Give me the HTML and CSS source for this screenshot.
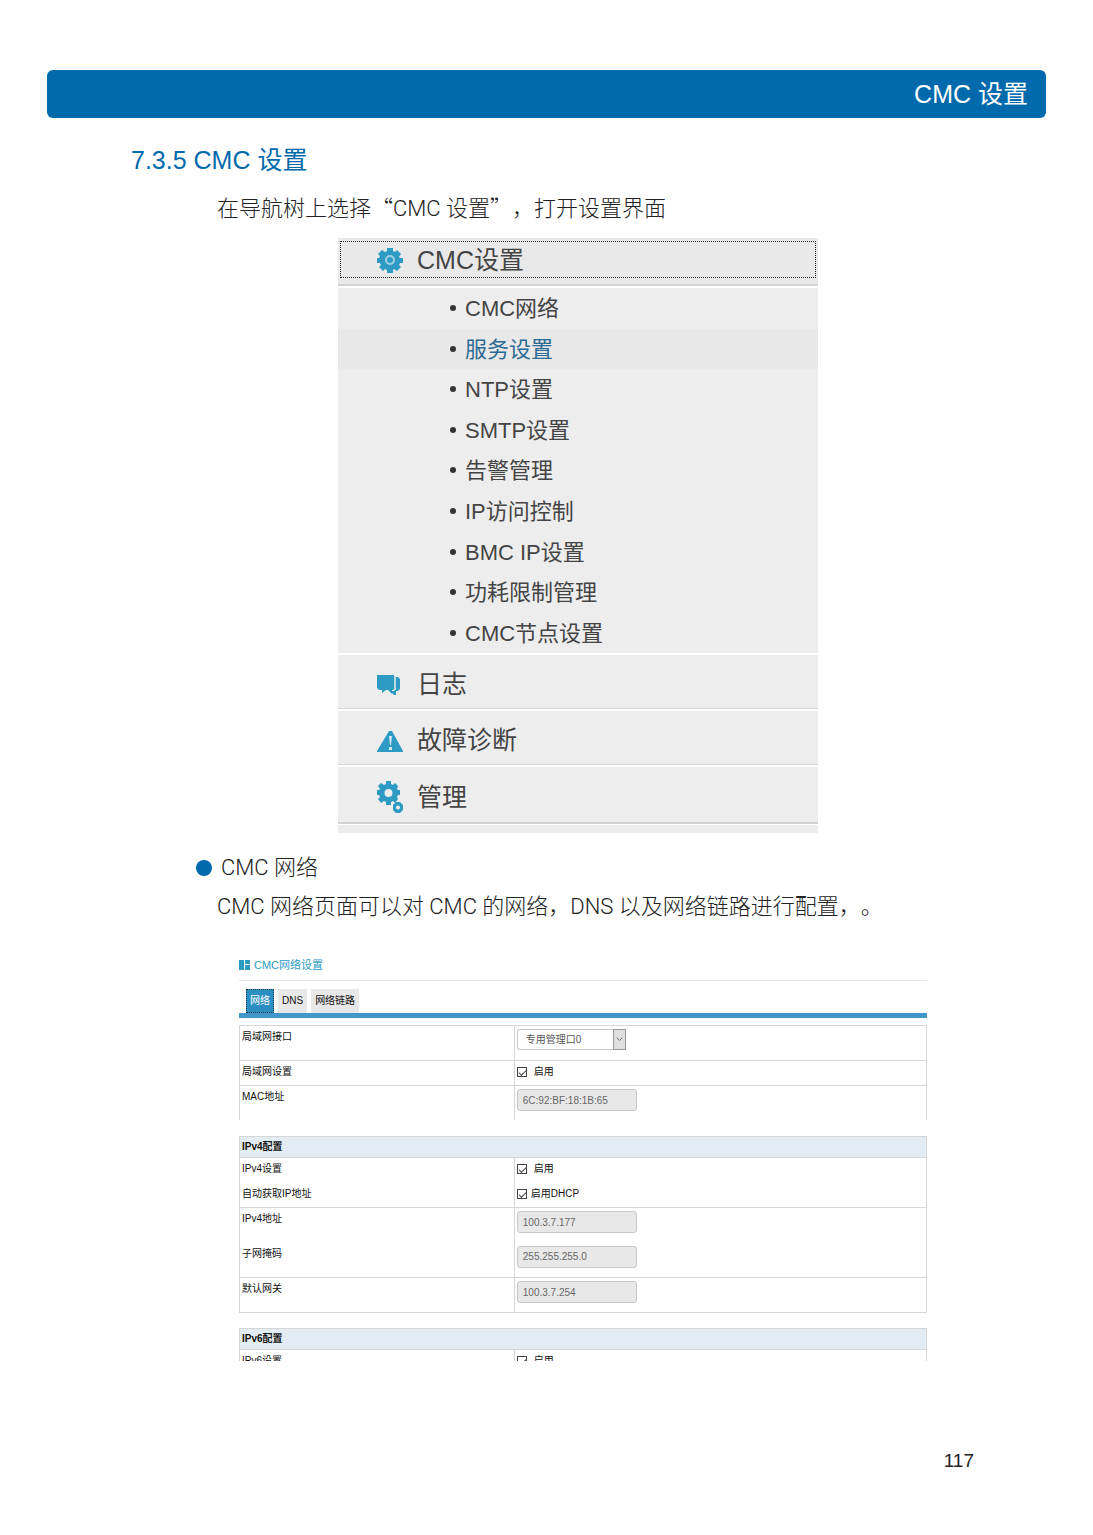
FILE: index.html
```
<!DOCTYPE html>
<html lang="zh-CN">
  <head>
    <meta charset="UTF-8" />
    <meta name="viewport" content="width=device-width, initial-scale=1.0" />
    <title>CMC 设置</title>
    <link rel="stylesheet" href="styles.css">
  </head>
  <body>
    <header class="page-header">CMC 设置</header>

    <main>
      <h1>7.3.5 CMC 设置</h1>
      <p>在导航树上选择<span class="cjk">“</span>CMC 设置<span class="cjk">”，</span>打开设置界面</p>

      <nav class="tree">
        <a class="tree-item focused" href="#cmc">
          <span class="focus">
            <svg class="icon" viewBox="0 0 26 26">
              <path fill="#2d9bc4" fill-rule="evenodd" d="M10 1h6v3l2 1 2-2 4 4-2 3 1 1h3v5h-3l-1 2 2 2-4 4-3-2-1 1v3h-6v-3l-2-1-2 2-4-4 2-2-1-2H0v-5h2l1-2-2-2 4-4 3 2 2-1z" />
              <circle cx="13" cy="13" r="4" fill="#2d9bc4" stroke="#a5d2e3" stroke-width="2" />
            </svg>
            <span class="name">CMC设置</span>
          </span>
        </a>
        <ul class="tree-sub">
          <li><a href="#network">CMC网络</a></li>
          <li class="active"><a href="#service">服务设置</a></li>
          <li><a href="#ntp">NTP设置</a></li>
          <li><a href="#smtp">SMTP设置</a></li>
          <li><a href="#alarm">告警管理</a></li>
          <li><a href="#access">IP访问控制</a></li>
          <li><a href="#bmc">BMC IP设置</a></li>
          <li><a href="#power">功耗限制管理</a></li>
          <li><a href="#node">CMC节点设置</a></li>
        </ul>
        <a class="tree-item" href="#log">
          <svg class="icon" viewBox="0 0 26 26">
            <path fill="#2d9bc4" d="M0 4h17v15h-2v4l-4-4H9l-4 3v-3H2l-2-2z" />
            <path fill="#2d9bc4" d="M19 6h2l2 2v10l-2 2h-2v4h-2l-4-4h4l2-2z" />
            <path fill="none" stroke="#8ec9df" d="M18 5v12l-2 2" />
          </svg>
          <span class="name">日志</span>
        </a>
        <a class="tree-item" href="#diagnosis">
          <svg class="icon" viewBox="0 0 26 26">
            <path fill="#2d9bc4" d="M12 4h3l11 20v1H0v-1z" />
            <path fill="#d5e7ee" d="M12 9h3l-1 9h-1zM12 20h3v3h-3z" />
          </svg>
          <span class="name">故障诊断</span>
        </a>
        <a class="tree-item last" href="#manage">
          <svg class="icon tall" viewBox="0 0 26 32">
            <path fill="#2d9bc4" fill-rule="evenodd" d="M9 0h5v3l2 1 2-2 3 3-1 3 1 1h2v5h-2l-1 2 1 2-3 4-2-2-2 1v3H9v-3l-2-1-3 2-3-4 2-2-1-2H0V9h2l1-1-2-3 3-3 3 2 2-1zM11.500 8a4 4 0 1 0 0 8 4 4 0 0 0 0-8z" />
            <path fill="#2d9bc4" fill-rule="evenodd" d="M19 21h4l3 3v5l-3 3h-4l-3-3v-5zM21 24.500a2 2 0 1 0 0 4 2 2 0 0 0 0-4z" />
          </svg>
          <span class="name">管理</span>
        </a>
        <div class="tree-rest"></div>
      </nav>

      <h2>CMC 网络</h2>
      <p>CMC 网络页面可以对 CMC 的网络，DNS 以及网络链路进行配置，。</p>

      <section class="panel">
        <h3>
          <svg class="icon-grid" viewBox="0 0 11 10">
            <path fill="#2d9bc4" d="M0 0h5v10H0zM6 0h5v4H6zM6 5h5v5H6z" />
          </svg>
          CMC网络设置
        </h3>
        <div class="tabs">
          <button class="active" type="button">网络</button>
          <button type="button">DNS</button>
          <button type="button">网络链路</button>
        </div>

        <div class="clip clip-lan">
          <table>
            <tr>
              <th><label for="lan">局域网接口</label></th>
              <td>
                <span class="select">
                  <select id="lan"><option>专用管理口0</option></select>
                  <svg class="arrow" viewBox="0 0 12 20">
                    <path fill="none" stroke="#666" d="M3 8l3 3 3-3" />
                  </svg>
                </span>
              </td>
            </tr>
            <tr class="short">
              <th>局域网设置</th>
              <td><input type="checkbox" id="lan-on" checked><label class="gap" for="lan-on">启用</label></td>
            </tr>
            <tr>
              <th><label for="mac">MAC地址</label></th>
              <td><input type="text" id="mac" value="6C:92:BF:18:1B:65" disabled></td>
            </tr>
          </table>
        </div>

        <table>
          <colgroup>
            <col class="col-name">
            <col>
          </colgroup>
          <tr class="title">
            <th colspan="2">IPv4配置</th>
          </tr>
          <tr class="short joined">
            <th>IPv4设置</th>
            <td><input type="checkbox" id="v4-on" checked><label class="gap" for="v4-on">启用</label></td>
          </tr>
          <tr class="short">
            <th>自动获取IP地址</th>
            <td><input type="checkbox" id="dhcp" checked><label for="dhcp">启用DHCP</label></td>
          </tr>
          <tr class="joined">
            <th><label for="ip">IPv4地址</label></th>
            <td><input type="text" id="ip" value="100.3.7.177" disabled></td>
          </tr>
          <tr>
            <th><label for="mask">子网掩码</label></th>
            <td><input type="text" id="mask" value="255.255.255.0" disabled></td>
          </tr>
          <tr>
            <th><label for="gateway">默认网关</label></th>
            <td><input type="text" id="gateway" value="100.3.7.254" disabled></td>
          </tr>
        </table>

        <div class="clip clip-v6">
          <table>
            <colgroup>
              <col class="col-name">
              <col>
            </colgroup>
            <tr class="title">
              <th colspan="2">IPv6配置</th>
            </tr>
            <tr class="short">
              <th>IPv6设置</th>
              <td><input type="checkbox" id="v6-on" checked><label class="gap" for="v6-on">启用</label></td>
            </tr>
          </table>
        </div>
      </section>
    </main>

    <footer>117</footer>
  </body>
</html>
```
FILE: styles.css
```
* {
  box-sizing: border-box;
}
body {
  margin: 0;
  padding: 70px 47px 0;
  background: #fff;
  color: #222;
  font-family: "Liberation Sans", "Noto Sans CJK SC", sans-serif;
  text-spacing-trim: space-all;
}
a {
  color: inherit;
  text-decoration: none;
}
.page-header {
  height: 48px;
  padding-right: 18px;
  border-radius: 6px;
  background: #006aad;
  color: #fff;
  font-size: 25px;
  line-height: 48px;
  text-align: right;
}
main {
  padding: 24px 21px 0 84px;
}
h1,
h2,
h3,
p {
  margin: 0;
  font-weight: 400;
}
h1 {
  color: #006aad;
  font-size: 25px;
  line-height: 36px;
}
p,
h2 {
  font-family: Roboto, "Noto Sans CJK SC", sans-serif;
  font-size: 22px;
  font-weight: 300;
}
p {
  padding-left: 86px;
  line-height: 40px;
}
h1 + p {
  margin: 8px 0 9px;
}
.cjk {
  font-family: "Noto Sans CJK SC", sans-serif;
}
h2 {
  display: flex;
  align-items: center;
  gap: 9px;
  margin-top: 16px;
  padding-left: 65px;
  line-height: 38px;
}
h2::before {
  content: "";
  width: 16px;
  height: 16px;
  border-radius: 50%;
  background: #006aad;
}

/* navigation tree */
.tree {
  max-width: 480px;
  margin: 0 auto;
  color: #444;
}
.tree-item {
  display: flex;
  align-items: center;
  gap: 14px;
  height: 54px;
  margin-bottom: 2px;
  padding: 4px 0 0 39px;
  border-bottom: 1px solid #d2d2d2;
  background: #ededed;
  font-size: 25px;
}
.tree-item.focused {
  height: 48px;
  padding: 3px 2px 6px;
  border-bottom-width: 2px;
  background: #e9e9e9;
}
.focus {
  display: flex;
  flex: 1;
  align-items: center;
  gap: 14px;
  height: 37px;
  padding-left: 36px;
  border: 1px dotted #222;
}
.name,
.tree-sub a {
  padding-bottom: 4px;
}
.tree-item.last {
  height: 57px;
  margin-bottom: 1px;
  border-bottom-width: 2px;
}
.tree-rest {
  height: 8px;
  background: #ededed;
}
.icon {
  width: 26px;
  height: 26px;
}
.icon.tall {
  height: 32px;
}
.tree-sub {
  display: grid;
  grid-auto-rows: 1fr;
  min-height: 365px;
  margin: 0 0 2px;
  padding: 0;
  background: #ededed;
  font-size: 22px;
  list-style: none;
}
.tree-sub li {
  display: flex;
  align-items: center;
  gap: 9px;
  padding-left: 112px;
}
.tree-sub li::before {
  content: "";
  width: 6px;
  height: 6px;
  border-radius: 50%;
  background: #333;
}
.tree-sub .active {
  background: #e8e8e8;
  color: #2b6a94;
}

/* network settings */
.panel {
  max-width: 698px;
  margin: 27px auto 0;
  padding-left: 10px;
  color: #111;
  font-size: 10px;
  line-height: 16px;
}
.panel h3 {
  display: flex;
  align-items: center;
  gap: 4px;
  height: 27px;
  padding-bottom: 5px;
  border-bottom: 1px solid #e6e6e6;
  color: #2d9bc4;
  font-size: 11px;
}
.icon-grid {
  width: 11px;
  height: 10px;
}
.tabs {
  display: flex;
  gap: 4px;
  margin: 8px 0 7px;
  padding-left: 7px;
  border-bottom: 5px solid #4197c9;
}
.tabs button {
  height: 24px;
  padding: 0 3px;
  border: 1px solid #e8e8e8;
  background: #e8e8e8;
  color: #111;
  font: inherit;
}
.tabs .active {
  border: 1px dotted #234;
  background: #2b8fc4;
  color: #fff;
}
table {
  width: 100%;
  border-collapse: collapse;
  table-layout: fixed;
}
th,
td {
  height: 35px;
  padding: 3px 2px 0;
  border: 1px solid #d6d6d6;
  text-align: left;
  vertical-align: top;
}
th {
  font-weight: 400;
}
.col-name,
.clip-lan th {
  width: 40%;
}
.short th,
.short td {
  height: 25px;
}
.title th {
  height: 21px;
  padding-top: 2px;
  background: #e4ecf3;
  font-weight: 700;
}
.joined th,
.joined td {
  border-bottom: 0;
}
.joined + tr th,
.joined + tr td {
  border-top: 0;
}
.clip {
  overflow: hidden;
}
.clip-lan {
  height: 95px;
  margin-bottom: 16px;
}
.clip-v6 {
  height: 33px;
  margin-top: 15px;
}
input[type="text"] {
  display: block;
  width: 120px;
  height: 22px;
  padding: 0 5px;
  border: 1px solid #c8c8c8;
  border-radius: 3px;
  background: #e8e8e8;
  color: #666;
  font: inherit;
}
input[type="checkbox"] {
  appearance: none;
  width: 10px;
  height: 10px;
  margin: 3px 4px 0 0;
  border: 1px solid #444;
  background: #fff;
  vertical-align: top;
}
input[type="checkbox"]:checked::before {
  content: "";
  display: block;
  width: 6px;
  height: 3px;
  margin: 2px 0 0 1px;
  border: solid #444;
  border-width: 0 0 1px 1px;
  transform: rotate(-45deg);
}
.gap {
  margin-left: 3px;
}
.select {
  display: flex;
  width: 109px;
  height: 21px;
}
.select select {
  flex: 1;
  padding: 0 8px;
  border: 1px solid #c8c8c8;
  border-right: 0;
  border-radius: 3px 0 0 3px;
  appearance: none;
  background: #fff;
  color: #555;
  font: inherit;
}
.arrow {
  width: 13px;
  border: 1px solid #999;
  background: #e0e0e0;
}

footer {
  margin-top: 88px;
  padding: 0 72px 64px 0;
  font-size: 19px;
  line-height: 24px;
  text-align: right;
}
```
